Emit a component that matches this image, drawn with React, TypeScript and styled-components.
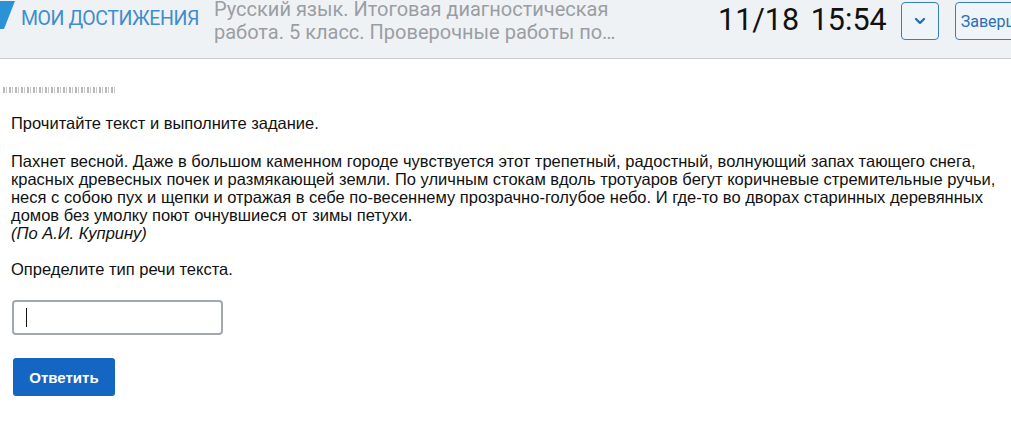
import React from "react";
import styled, { createGlobalStyle } from "styled-components";

const Global = createGlobalStyle`
  html, body { margin: 0; padding: 0; background: #fff; overflow: hidden; }
  body { font-family: "Liberation Sans", Arial, sans-serif; }
`;

const Header = styled.header`
  height: 58px;
  background: #eff2f5;
  border-bottom: 1px solid #c9ccd0;
  display: flex;
  align-items: flex-start;
  white-space: nowrap;
  font-family: Roboto, "Noto Sans", sans-serif;
`;

const Brand = styled.div`
  display: flex;
  align-items: flex-start;
  gap: 6px;
  width: 214px;
  flex-shrink: 0;
`;

const BrandText = styled.span`
  font-size: 19.5px;
  letter-spacing: -0.45px;
  color: #3f8dcd;
  padding-top: 7px;
`;

const Title = styled.div`
  width: 404px;
  flex-shrink: 0;
  font-size: 20px;
  line-height: 23px;
  color: #9a9ea3;
  white-space: normal;
  display: -webkit-box;
  -webkit-line-clamp: 2;
  -webkit-box-orient: vertical;
  overflow: hidden;
  margin-top: -2px;
`;

const Clock = styled.div`
  margin-left: 100px;
  font-size: 30.5px;
  color: #111;
  padding-top: 2px;
  word-spacing: 4px;
  flex-shrink: 0;
`;

const IconButton = styled.button`
  margin-left: 14px;
  margin-top: 2px;
  width: 38px;
  height: 38px;
  border: 1px solid #3a7dbf;
  border-radius: 4px;
  background: #eff4f9;
  display: flex;
  align-items: center;
  justify-content: center;
  padding: 0;
  flex-shrink: 0;
`;

const FinishButton = styled.button`
  margin-left: 16px;
  margin-top: 2px;
  height: 38px;
  padding: 0 12px 0 5px;
  border: 1px solid #3a7dbf;
  border-radius: 4px;
  background: #eff4f9;
  color: #2c6fb3;
  font-family: Roboto, sans-serif;
  font-size: 16px;
  flex-shrink: 0;
`;

const Main = styled.main`
  padding: 28px 11px 0 11px;
  font-size: 16.5px;
  line-height: 18px;
  color: #111;
`;

const Marker = styled.div`
  margin-left: -8px;
  width: 112px;
  height: 6px;
  background: repeating-linear-gradient(
    90deg,
    #b8b8b8 0 2px,
    #fff 2px 3px,
    #c9c9c9 3px 4px,
    #fff 4px 6px
  );
`;

const Para = styled.p`
  margin: 0 0 18px 0;
`;

const Lead = styled(Para)`
  margin-top: 21px;
  margin-bottom: 20px;
`;

const Source = styled.em`
  display: block;
`;

const Input = styled.div`
  margin-top: 22px;
  margin-left: 1px;
  width: 195px;
  height: 31px;
  border: 2px solid #a3a8ad;
  border-radius: 4px;
  display: flex;
  align-items: center;
  padding-left: 12px;
`;

const Caret = styled.span`
  width: 1px;
  height: 19px;
  background: #111;
`;

const Submit = styled.button`
  margin-top: 23px;
  margin-left: 2px;
  width: 102px;
  height: 38px;
  border: none;
  border-radius: 3px;
  background: #1565c2;
  color: #fff;
  font-family: "Liberation Sans", Arial, sans-serif;
  font-size: 15px;
  font-weight: 600;
  display: block;
`;

export default function App() {
  return (
    <>
      <Global />
      <Header>
        <Brand>
          <svg width="15" height="30" viewBox="0 0 15 30">
            <polygon points="0,1 15,1 4,29 0,29" fill="#2b92d6" />
          </svg>
          <BrandText>МОИ ДОСТИЖЕНИЯ</BrandText>
        </Brand>
        <Title>
          Русский язык. Итоговая диагностическая работа. 5 класс. Проверочные работы по русскому языку
        </Title>
        <Clock>11/18 15:54</Clock>
        <IconButton aria-label="menu">
          <svg width="12" height="8" viewBox="0 0 12 8">
            <path d="M2 2 L6 6 L10 2" fill="none" stroke="#2c6fb3" strokeWidth="2.4" strokeLinecap="round" strokeLinejoin="round" />
          </svg>
        </IconButton>
        <FinishButton>Завершить</FinishButton>
      </Header>
      <Main>
        <Marker />
        <Lead>Прочитайте текст и выполните задание.</Lead>
        <Para>
          Пахнет весной. Даже в большом каменном городе чувствуется этот трепетный, радостный, волнующий запах тающего снега,
          красных древесных почек и размякающей земли. По уличным стокам вдоль тротуаров бегут коричневые стремительные ручьи,
          неся с собою пух и щепки и отражая в себе по-весеннему прозрачно-голубое небо. И где-то во дворах старинных деревянных
          домов без умолку поют очнувшиеся от зимы петухи.
          <Source>(По А.И. Куприну)</Source>
        </Para>
        <Para>Определите тип речи текста.</Para>
        <Input>
          <Caret />
        </Input>
        <Submit>Ответить</Submit>
      </Main>
    </>
  );
}
